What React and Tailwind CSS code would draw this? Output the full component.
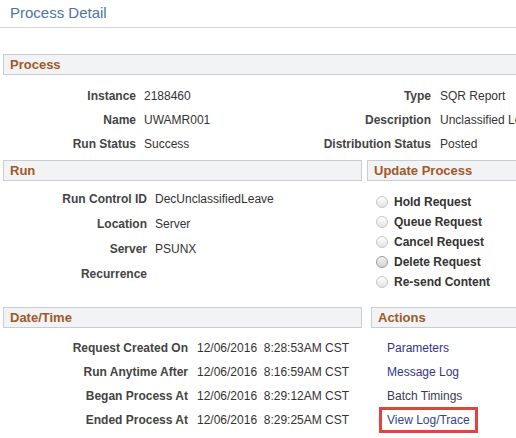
import React from "react";

function Header({ children, className }) {
  return (
    <div className={"h-[21px] border border-[#c9cdd1] bg-[#f1f3f4] pl-[6px] text-[13px] font-bold leading-[19px] text-[#a0582a] " + className}>
      {children}
    </div>
  );
}

function Row({ label, value, labelW, gap }) {
  return (
    <div className="flex h-[24px] items-center">
      <div className={"text-right font-bold text-[#444] " + labelW}>{label}</div>
      <div className={"whitespace-nowrap text-[#333] " + gap}>{value}</div>
    </div>
  );
}

function Radio({ label, dark }) {
  return (
    <div className="flex h-[20px] items-center pl-[9px]">
      <span
        className={
          dark
            ? "h-[12px] w-[12px] rounded-full border border-[#9a9a9a] bg-gradient-to-b from-[#f2f2f2] to-[#d4d4d4]"
            : "h-[12px] w-[12px] rounded-full border border-[#c6c6c6] bg-gradient-to-b from-[#ffffff] to-[#e4e4e4]"
        }
      />
      <span className="ml-[6px] font-bold text-[#333]">{label}</span>
    </div>
  );
}

export default function App() {
  return (
    <div className="h-[438px] w-[516px] overflow-hidden bg-white font-['Liberation_Sans',Arial,sans-serif] text-[12px]">
      <div className="h-[28px] w-[516px] border-b border-[#d4d4d4] pl-[10px] text-[15px] leading-[25px] text-[#4e74a3]">
        Process Detail
      </div>

      <div className="w-[560px] pl-[3px]">
        {/* Process */}
        <Header className="mt-[26px]">Process</Header>
        <div className="mt-[9px] flex">
          <div className="w-[297px]">
            <Row label="Instance" value="2188460" labelW="w-[133px]" gap="ml-[8px]" />
            <Row label="Name" value="UWAMR001" labelW="w-[133px]" gap="ml-[8px]" />
            <Row label="Run Status" value="Success" labelW="w-[133px]" gap="ml-[8px]" />
          </div>
          <div>
            <Row label="Type" value="SQR Report" labelW="w-[131px]" gap="ml-[9px]" />
            <Row label="Description" value="Unclassified Leave" labelW="w-[131px]" gap="ml-[9px]" />
            <Row label="Distribution Status" value="Posted" labelW="w-[131px]" gap="ml-[9px]" />
          </div>
        </div>

        {/* Run / Update Process */}
        <div className="mt-[4px] flex">
          <div className="w-[359px]">
            <Header>Run</Header>
            <div className="mt-[5px]">
              <div className="flex h-[25px] items-center">
                <div className="w-[144px] text-right font-bold text-[#444]">Run Control ID</div>
                <div className="ml-[8px] whitespace-nowrap text-[#333]">DecUnclassifiedLeave</div>
              </div>
              <div className="flex h-[25px] items-center">
                <div className="w-[144px] text-right font-bold text-[#444]">Location</div>
                <div className="ml-[8px] text-[#333]">Server</div>
              </div>
              <div className="flex h-[25px] items-center">
                <div className="w-[144px] text-right font-bold text-[#444]">Server</div>
                <div className="ml-[8px] text-[#333]">PSUNX</div>
              </div>
              <div className="flex h-[25px] items-center">
                <div className="w-[144px] text-right font-bold text-[#444]">Recurrence</div>
              </div>
            </div>
          </div>
          <div className="ml-[5px] flex-1">
            <Header>Update Process</Header>
            <div className="mt-[11px]">
              <Radio label="Hold Request" />
              <Radio label="Queue Request" />
              <Radio label="Cancel Request" />
              <Radio label="Delete Request" dark />
              <Radio label="Re-send Content" />
            </div>
          </div>
        </div>

        {/* Date/Time / Actions */}
        <div className="mt-[15px] flex">
          <div className="w-[359px]">
            <Header>Date/Time</Header>
            <div className="mt-[8px]">
              <Row label="Request Created On" value="12/06/2016  8:28:53AM CST" labelW="w-[185px]" gap="ml-[9px] whitespace-pre" />
              <Row label="Run Anytime After" value="12/06/2016  8:16:59AM CST" labelW="w-[185px]" gap="ml-[9px] whitespace-pre" />
              <Row label="Began Process At" value="12/06/2016  8:29:12AM CST" labelW="w-[185px]" gap="ml-[9px] whitespace-pre" />
              <Row label="Ended Process At" value="12/06/2016  8:29:25AM CST" labelW="w-[185px]" gap="ml-[9px] whitespace-pre" />
            </div>
          </div>
          <div className="ml-[9px] flex-1">
            <Header>Actions</Header>
            <div className="mt-[8px] pl-[16px]">
              <div className="flex h-[24px] items-center text-[#34348c]">Parameters</div>
              <div className="flex h-[24px] items-center text-[#34348c]">Message Log</div>
              <div className="flex h-[24px] items-center text-[#3a3a52]">Batch Timings</div>
              <div className="flex h-[24px] items-center">
                <span className="ml-[-8px] inline-flex h-[26px] items-center border-[3px] border-[#e4423e] pl-[5px] pr-[5px] text-[#34448c]">
                  View Log/Trace
                </span>
              </div>
            </div>
          </div>
        </div>
      </div>
    </div>
  );
}
